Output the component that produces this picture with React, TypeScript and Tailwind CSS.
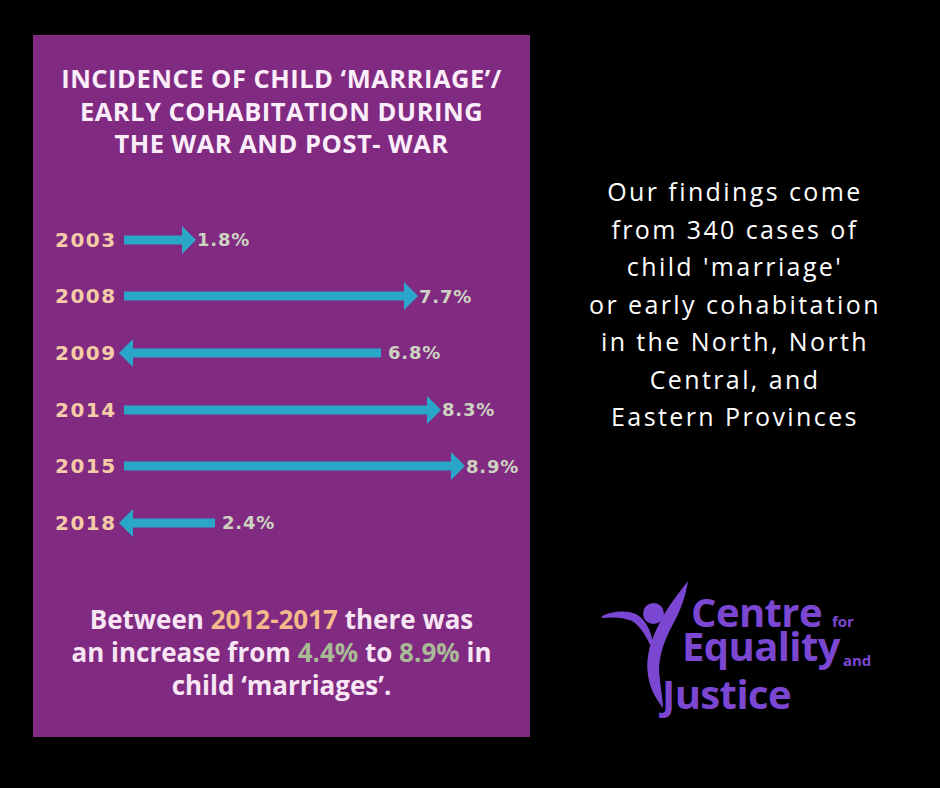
const rows = [
  { year: "2003", dir: "right", width: 72, value: "1.8%" },
  { year: "2008", dir: "right", width: 294, value: "7.7%" },
  { year: "2009", dir: "left", width: 262, value: "6.8%" },
  { year: "2014", dir: "right", width: 317, value: "8.3%" },
  { year: "2015", dir: "right", width: 341, value: "8.9%" },
  { year: "2018", dir: "left", width: 96, value: "2.4%" },
];

const findings = [
  "Our findings come",
  "from 340 cases of",
  "child 'marriage'",
  "or early cohabitation",
  "in the North, North",
  "Central, and",
  "Eastern Provinces",
];

function Arrow({ dir, width }: { dir: string; width: number }) {
  const head = 14;
  return (
    <svg width={width} height={28} viewBox={`0 0 ${width} 28`} className="shrink-0">
      {dir === "right" ? (
        <>
          <rect x={0} y={9.5} width={width - head + 1} height={9} fill="#2aa6c8" />
          <polygon points={`${width - head},0 ${width},14 ${width - head},28`} fill="#2aa6c8" />
        </>
      ) : (
        <>
          <rect x={head - 1} y={9.5} width={width - head + 1} height={9} fill="#2aa6c8" />
          <polygon points={`${head},0 0,14 ${head},28`} fill="#2aa6c8" />
        </>
      )}
    </svg>
  );
}

function Logo() {
  return (
    <div className="relative ml-[60px] mt-[139.5px] h-[140px] w-[300px] self-start font-['Open_Sans',sans-serif] font-bold text-[#7b47d2]">
      <svg
        className="absolute left-0 top-0"
        width={110}
        height={140}
        viewBox="590 575 110 140"
      >
        <circle cx={653.5} cy={613.5} r={10.5} fill="#7b47d2" />
        <path
          d="M602 616 C612 611 626 610 636 614 C645 619 651 630 653 643 L650 645 C646 636 640 626 632 621 C623 617 612 617 602 618 Z"
          fill="#7b47d2"
        />
        <path
          d="M688 581 C686 595 681 610 672 626 C662 645 657 662 660 680 C661 692 663 700 663 708 C657 700 650 690 648 675 C645 655 652 638 660 622 C668 606 678 594 688 581 Z"
          fill="#7b47d2"
        />
      </svg>
      <div className="mt-[20px] pl-[101px] text-[40px] leading-[33px] tracking-[-0.6px]">
        Centre
        <span className="ml-[10px] text-[15px] leading-none tracking-normal">for</span>
      </div>
      <div className="pl-[92px] text-[40px] leading-[33px] tracking-[-0.6px]">
        Equality
        <span className="ml-[3px] align-[-5px] text-[15px] leading-none tracking-normal">and</span>
      </div>
      <div className="mt-[9px] pl-[72px] text-[40px] leading-[33px] tracking-[-0.6px]">
        Justice
      </div>
    </div>
  );
}

export default function App() {
  return (
    <div className="flex h-[788px] w-[940px] bg-black">
      <div className="ml-[33px] mt-[35px] flex h-[702px] w-[497px] flex-col bg-[#812a82]">
        <h1 className="mt-[27px] text-center font-['Open_Sans',sans-serif] text-[25.5px] font-bold leading-[32.5px] tracking-[0.5px] text-[#fbeefa]">
          INCIDENCE OF CHILD ‘MARRIAGE’/
          <br />
          EARLY COHABITATION DURING
          <br />
          THE WAR AND POST- WAR
        </h1>

        <div className="mt-[52px] flex flex-col pl-[22px]">
          {rows.map((row) => (
            <div key={row.year} className="flex h-[56.6px] items-center">
              <span className="w-[64px] shrink-0 font-['DejaVu_Sans',sans-serif] text-[20px] font-bold tracking-[1.5px] text-[#f6cca6]">
                {row.year}
              </span>
              <div className={row.dir === "right" ? "ml-[5px]" : "ml-0"}>
                <Arrow dir={row.dir} width={row.width} />
              </div>
              <span
                className={
                  (row.dir === "right" ? "ml-[1px]" : "ml-[7px]") +
                  " font-['DejaVu_Sans',sans-serif] text-[18px] font-bold tracking-[0.8px] text-[#cdd3c0]"
                }
              >
                {row.value}
              </span>
            </div>
          ))}
        </div>

        <p className="mt-[52px] text-center font-['Open_Sans',sans-serif] text-[26px] font-bold leading-[33px] text-[#f8e6f5]">
          Between <span className="text-[#f3ba8b]">2012-2017</span> there was
          <br />
          an increase from <span className="text-[#a8ba96]">4.4%</span> to{" "}
          <span className="text-[#a8ba96]">8.9%</span> in
          <br />
          child ‘marriages’.
        </p>
      </div>

      <div className="flex flex-1 flex-col items-center">
        <div className="mt-[173px] flex flex-col items-center font-['Open_Sans',sans-serif] text-[25px] leading-[37.5px] tracking-[2.4px] text-white">
          {findings.map((line) => (
            <div key={line}>{line}</div>
          ))}
        </div>
        <Logo />
      </div>
    </div>
  );
}
